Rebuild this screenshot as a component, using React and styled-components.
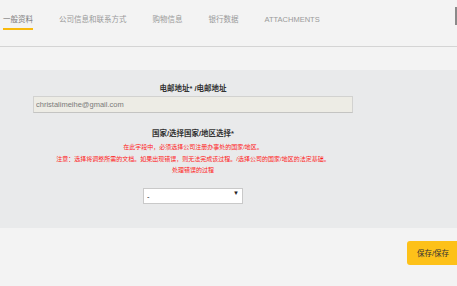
import styled, { createGlobalStyle } from "styled-components";

const GlobalStyle = createGlobalStyle`
  html, body {
    margin: 0;
    padding: 0;
    background: #f3f3f3;
    overflow: hidden;
  }
  body {
    font-family: "Liberation Sans", "Noto Sans CJK SC", sans-serif;
  }
`;

const Page = styled.div`
  width: 457px;
  height: 286px;
  background: #f3f3f3;
  display: flex;
  flex-direction: column;
`;

const TabBar = styled.nav`
  display: flex;
  align-items: flex-start;
  gap: 26px;
  height: 46px;
  padding-left: 3px;
  border-bottom: 1px solid #d4d4d4;
  box-sizing: content-box;
`;

const Tab = styled.div`
  font-family: "Liberation Sans", "Noto Sans CJK SC", sans-serif;
  font-size: 7.5px;
  line-height: 10px;
  color: ${(p) => (p.$active ? "#7d7d7d" : "#9a9a9a")};
  padding: 15px 0 3px;
  border-bottom: 2px solid ${(p) => (p.$active ? "#f8b90c" : "transparent")};
  white-space: nowrap;
`;

const ScrollMark = styled.div`
  margin-left: auto;
  margin-top: 7px;
  width: 2px;
  height: 18px;
  background: #8a8a8a;
`;

const Panel = styled.section`
  margin-top: 23px;
  background: #e9eaeb;
  padding: 14px 0 27px 33px;
`;

const Column = styled.div`
  width: 320px;
  display: flex;
  flex-direction: column;
  align-items: center;
`;

const Label = styled.label`
  font-family: "Liberation Sans", "Noto Sans CJK SC", sans-serif;
  font-size: 7.5px;
  line-height: 10px;
  font-weight: bold;
  color: #333;
  text-align: center;
  margin-top: ${(p) => p.$top || 0}px;
`;

const TextInput = styled.input`
  box-sizing: border-box;
  width: 320px;
  height: 17px;
  margin-top: 2px;
  padding: 0 2px;
  background: #edece5;
  border: 1px solid #d2d2d0;
  border-bottom-color: #c4c4c2;
  font-family: "Liberation Sans", sans-serif;
  font-size: 7.5px;
  color: #7a7a7a;
  outline: none;
`;

const Warning = styled.div`
  margin-top: 3px;
  font-family: "Liberation Sans", "Noto Sans CJK SC", sans-serif;
  font-size: 6px;
  line-height: 11.5px;
  color: #ff1a1a;
  text-align: center;
  white-space: nowrap;
`;

const SelectWrap = styled.div`
  position: relative;
  margin-top: 8px;
  width: 100px;
  height: 16px;
`;

const Select = styled.select`
  appearance: none;
  box-sizing: border-box;
  width: 100%;
  height: 100%;
  background: #fff;
  border: 1px solid #c9c9c9;
  padding: 0 3px;
  font-family: "Liberation Sans", sans-serif;
  font-size: 7.5px;
  color: #111;
  outline: none;
`;

const Arrow = styled.span`
  position: absolute;
  right: 4px;
  top: 4px;
  font-size: 6px;
  line-height: 8px;
  color: #222;
  pointer-events: none;
`;

const Footer = styled.footer`
  display: flex;
  justify-content: flex-end;
  margin-top: 13px;
`;

const SaveButton = styled.button`
  width: 50px;
  height: 24px;
  padding: 0 0 0 2px;
  background: #fdc119;
  border: none;
  border-radius: 3px 0 0 3px;
  font-family: "Liberation Sans", "Noto Sans CJK SC", sans-serif;
  font-size: 7.5px;
  color: #333;
  cursor: pointer;
`;

const tabs = ["一般资料", "公司信息和联系方式", "购物信息", "银行数据", "ATTACHMENTS"];

export default function App() {
  return (
    <Page>
      <GlobalStyle />
      <TabBar>
        {tabs.map((t, i) => (
          <Tab key={t} $active={i === 0}>
            {t}
          </Tab>
        ))}
        <ScrollMark />
      </TabBar>
      <Panel>
        <Column>
          <Label>电邮地址* /电邮地址</Label>
          <TextInput readOnly value="christalimeihe@gmail.com" />
          <Label $top={16}>国家/选择国家/地区选择*</Label>
          <Warning>
            在此字段中，必须选择公司注册办事处的国家/地区。
            <br />
            注意：选择将调整所需的文档。如果出现错误，则无法完成该过程。/选择公司的国家/地区的法定基础。
            <br />
            处理错误的过程
          </Warning>
          <SelectWrap>
            <Select defaultValue="-">
              <option value="-">-</option>
            </Select>
            <Arrow>▼</Arrow>
          </SelectWrap>
        </Column>
      </Panel>
      <Footer>
        <SaveButton>保存/保存</SaveButton>
      </Footer>
    </Page>
  );
}
